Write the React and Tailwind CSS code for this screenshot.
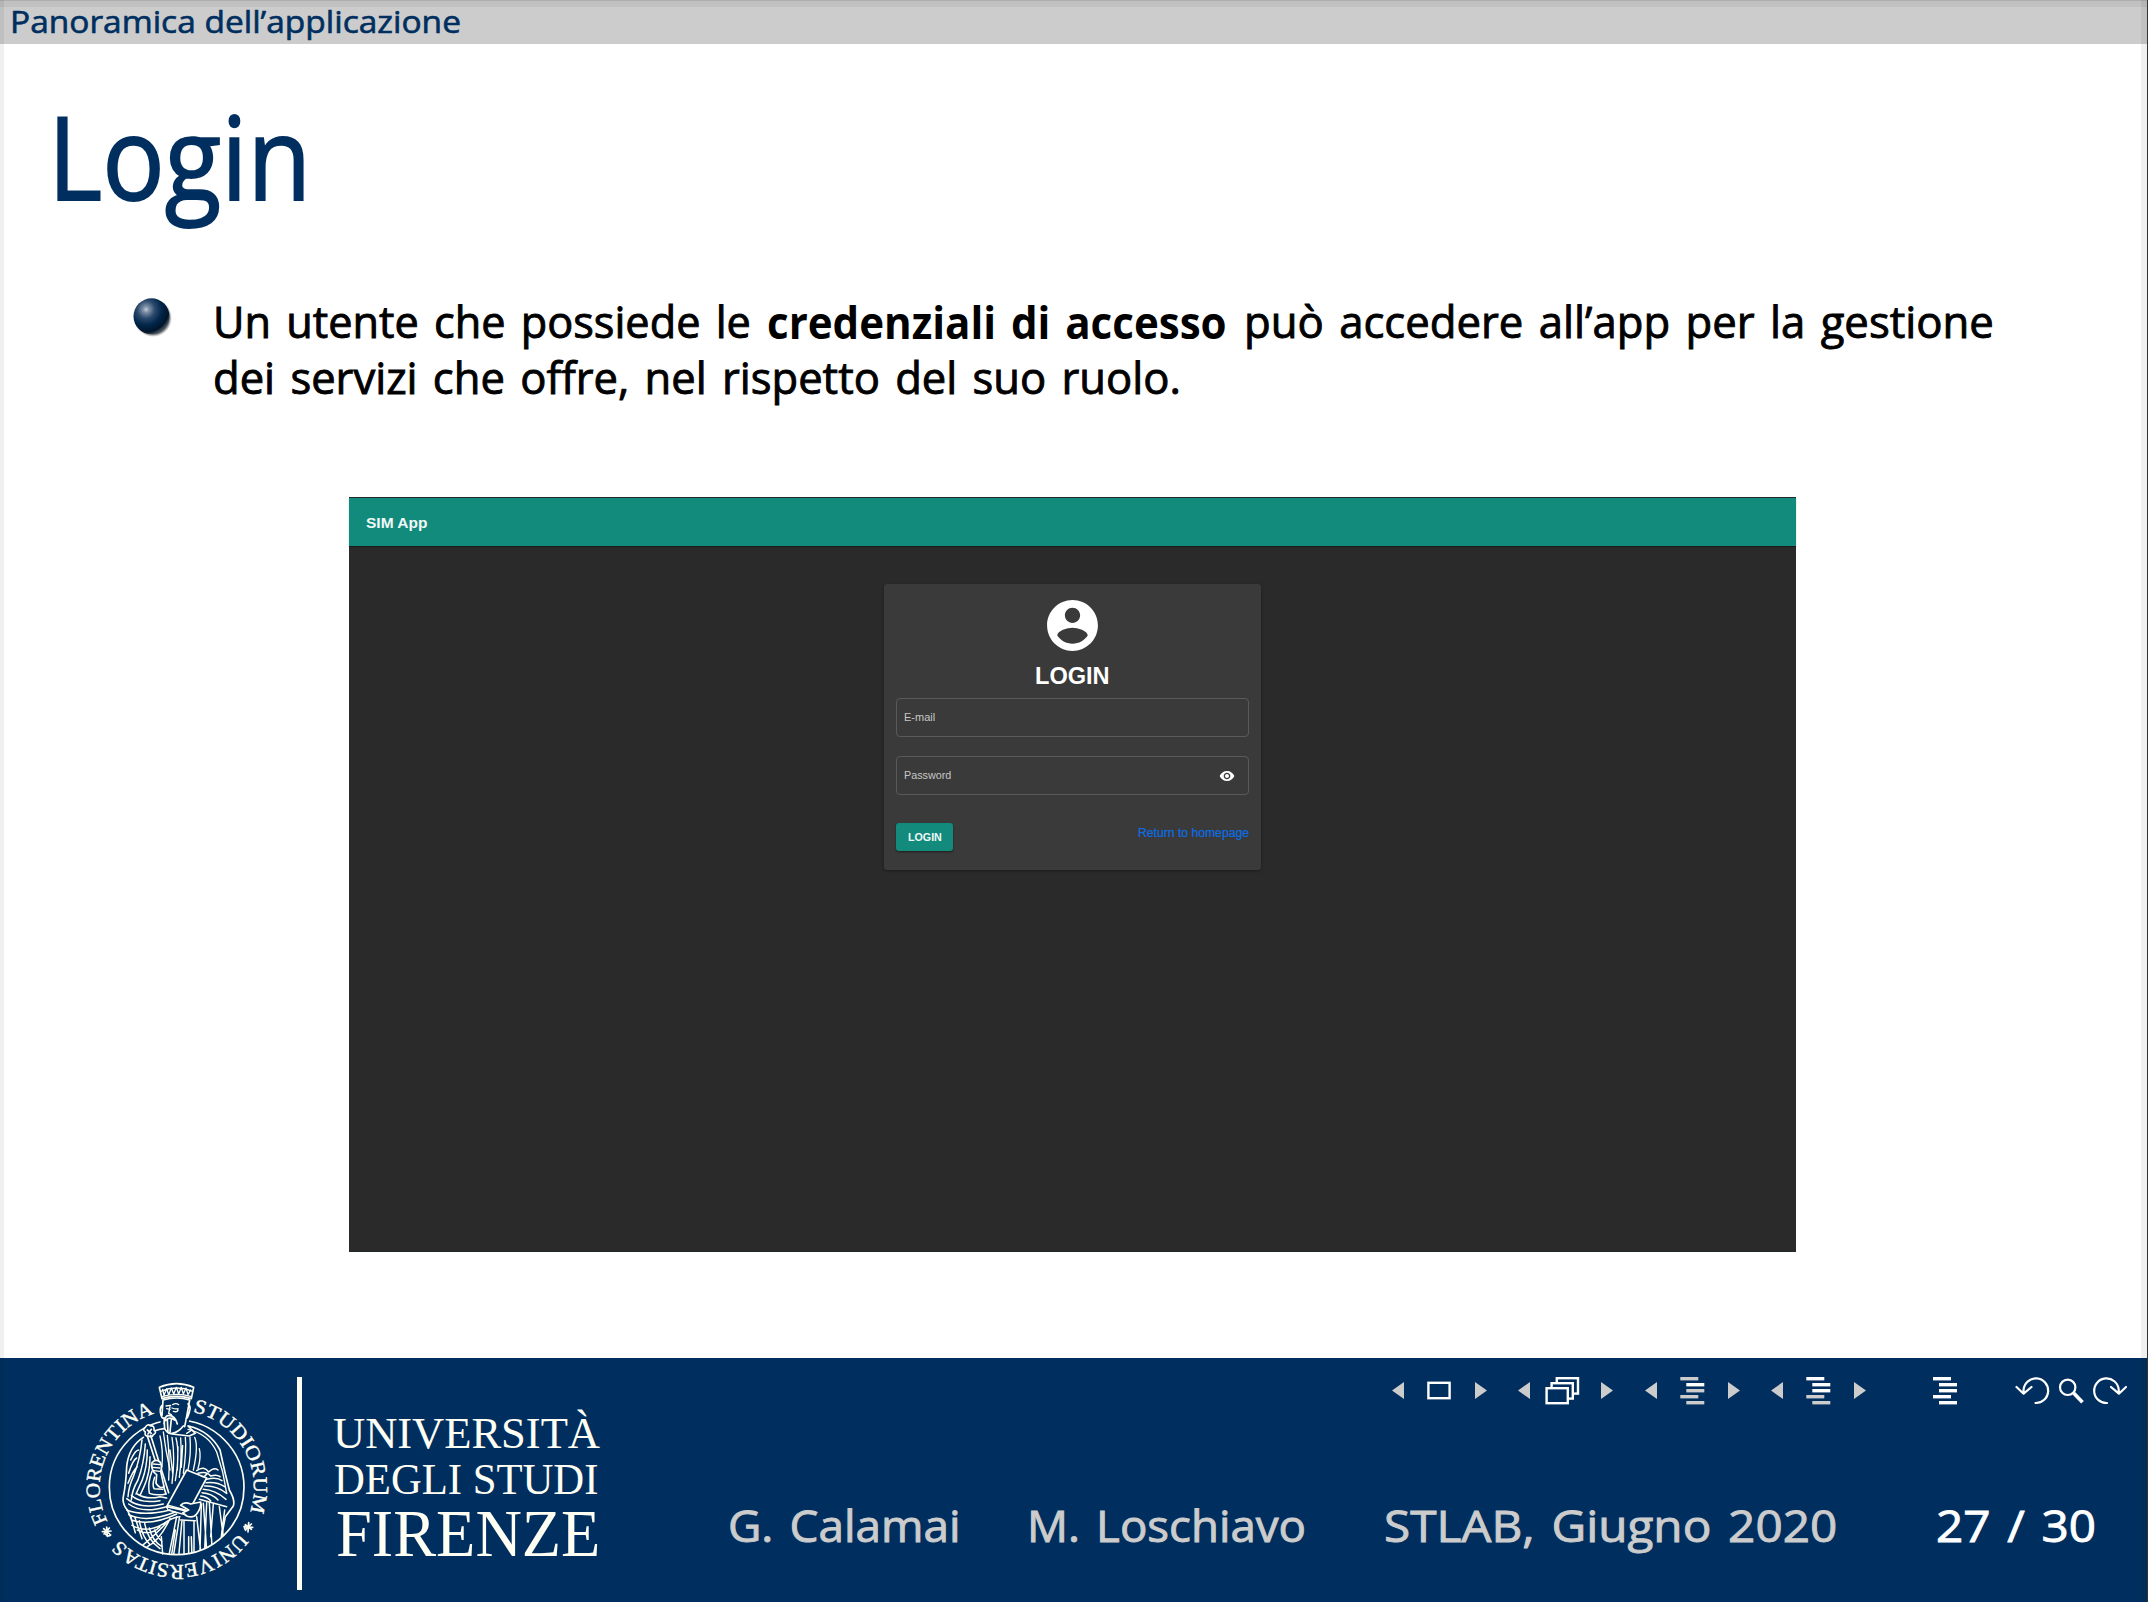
import React, { useLayoutEffect, useRef } from "react";

const SANS = "font-['Open_Sans','Noto_Sans',sans-serif]";
const SERIF = "font-['Liberation_Serif',serif]";
const HELV = "font-['Liberation_Sans',Arial,sans-serif]";
const BODY = "text-[43.5px] [word-spacing:4px] [-webkit-text-stroke:0.9px_currentColor]";

// Single line of text squeezed or stretched horizontally to fill its box.
function Fit({ className = "", textClass = "", children }) {
  const box = useRef(null);
  const text = useRef(null);
  useLayoutEffect(() => {
    const apply = () => {
      const k = box.current.clientWidth / text.current.offsetWidth;
      text.current.style.transform = `scaleX(${k})`;
    };
    apply();
    document.fonts?.ready.then(apply);
  }, []);
  return (
    <span ref={box} className={`block shrink-0 whitespace-nowrap ${className}`}>
      <span ref={text} className={`block w-max origin-left ${textClass}`}>
        {children}
      </span>
    </span>
  );
}

function Bullet() {
  return (
    <svg className="mt-[3px] h-10 w-10 shrink-0" viewBox="0 0 40 40">
      <defs>
        <radialGradient id="ball" cx="0.35" cy="0.31" r="0.7">
          <stop offset="0" stopColor="#c3ccd8" />
          <stop offset="0.12" stopColor="#7f91a8" />
          <stop offset="0.35" stopColor="#2c4a6d" />
          <stop offset="0.62" stopColor="#02264b" />
          <stop offset="0.9" stopColor="#001429" />
          <stop offset="1" stopColor="#3c4a5a" />
        </radialGradient>
        <radialGradient id="ballShade" cx="0.5" cy="0.5" r="0.5">
          <stop offset="0.85" stopColor="#555" stopOpacity="0.8" />
          <stop offset="1" stopColor="#777" stopOpacity="0" />
        </radialGradient>
      </defs>
      <circle cx="21" cy="21" r="19" fill="url(#ballShade)" />
      <circle cx="19.5" cy="19.3" r="18" fill="url(#ball)" />
    </svg>
  );
}

function LoginCard() {
  return (
    <div className="mx-auto mt-[38px] flex h-[286px] w-[377px] flex-col rounded-[3px] bg-[#3a3a3a] px-3 shadow-[0_1px_3px_rgba(0,0,0,0.35)]">
      <svg className="mx-auto mt-[11px] h-[61px] w-[61px] shrink-0" viewBox="0 0 24 24" fill="#fff">
        <path d="M12 2C6.48 2 2 6.48 2 12s4.48 10 10 10 10-4.48 10-10S17.52 2 12 2zm0 3c1.66 0 3 1.34 3 3s-1.34 3-3 3-3-1.34-3-3 1.34-3 3-3zm0 14.2c-2.5 0-4.71-1.28-6-3.22.03-1.99 4-3.08 6-3.08 1.99 0 5.97 1.09 6 3.08-1.29 1.94-3.5 3.22-6 3.22z" />
      </svg>
      <Fit className="mx-auto mt-[7px] h-[26px] w-[75px] leading-[26px] text-white" textClass="text-[24.5px] font-bold">
        LOGIN
      </Fit>
      <div className="mt-[9px] flex h-[39px] shrink-0 items-center rounded-[4px] border border-[#5a5a5a] px-[7px]">
        <Fit className="-mt-[2px] w-[31px] leading-[14px] text-[#c6c6c6]" textClass="text-[11px]">
          E-mail
        </Fit>
      </div>
      <div className="mt-[19px] flex h-[39px] shrink-0 items-center justify-between rounded-[4px] border border-[#5a5a5a] pl-[7px] pr-[13px]">
        <Fit className="-mt-[2px] w-[47px] leading-[14px] text-[#c6c6c6]" textClass="text-[11px]">
          Password
        </Fit>
        <svg className="mt-px h-4 w-4" viewBox="0 0 24 24" fill="#fff">
          <path d="M12 4.5C7 4.5 2.73 7.61 1 12c1.73 4.39 6 7.5 11 7.5s9.27-3.11 11-7.5c-1.73-4.39-6-7.5-11-7.5zM12 17c-2.76 0-5-2.24-5-5s2.24-5 5-5 5 2.24 5 5-2.24 5-5 5zm0-8c-1.66 0-3 1.34-3 3s1.34 3 3 3 3-1.34 3-3-1.34-3-3-3z" />
        </svg>
      </div>
      <div className="mt-[28px] flex items-start justify-between">
        <button className="flex h-7 w-[57px] items-center justify-center rounded-[3px] bg-[#128b7d] shadow-[0_1px_2px_rgba(0,0,0,0.5)]">
          <Fit className="w-[34px] leading-[14px] text-[#f1f8f7]" textClass="text-[11px] font-bold">
            LOGIN
          </Fit>
        </button>
        <Fit className="mt-px w-[111px] leading-[18px] text-[#0b6ee6]" textClass="text-[12.5px] [-webkit-text-stroke:0.2px_currentColor]">
          Return to homepage
        </Fit>
      </div>
    </div>
  );
}

function Seal() {
  return (
    <svg className="h-[244px] w-[240px] shrink-0" viewBox="0 24 720 732" fill="none" stroke="#fffff4" strokeWidth="5" strokeLinecap="round" strokeLinejoin="round">
      <defs>
        <path id="arcLeft" d="M 146 520 A 231 231 0 0 1 295 188" />
        <path id="arcRight" d="M 398 186 A 231 231 0 0 1 567 493" />
        <path id="arcBottom" d="M 537 548 A 231 231 0 0 1 178 567" />
        <clipPath id="inner">
          <circle cx="350" cy="412" r="202" />
        </clipPath>
      </defs>
      <g fill="#fffff4" stroke="#fffff4" strokeWidth="1.2" className="font-['Liberation_Serif',serif] text-[60px]">
        <text>
          <textPath href="#arcLeft" startOffset="6" textLength="400" lengthAdjust="spacingAndGlyphs">FLORENTINA</textPath>
        </text>
        <text>
          <textPath href="#arcRight" textLength="390" lengthAdjust="spacingAndGlyphs">STUDIORUM</textPath>
        </text>
        <text>
          <textPath href="#arcBottom" textLength="410" lengthAdjust="spacingAndGlyphs">UNIVERSITAS</textPath>
        </text>
      </g>
      <circle cx="350" cy="412" r="202" strokeWidth="5" />
      {/* fleurons between the words */}
      <g strokeWidth="5">
        <path d="M127 545 l26 -2 M140 531 l2 28 M131 536 l18 16 M148 534 l-16 18 M137 553 q8 8 15 2" />
        <path d="M552 530 l26 2 M566 518 l-2 28 M556 524 l18 14 M574 522 l-17 17 M557 541 q-6 -8 -2 -12" />
      </g>
      {/* crown and head */}
      <path fill="#002f5f" stroke="none" d="M297 105 L401 105 L392 160 L386 222 L300 240 L306 160 Z" />
      <path d="M298 112 Q350 90 401 112 L394 146 Q350 132 306 146 Z" />
      <path d="M302 124 Q350 104 398 124" strokeWidth="4" />
      <path strokeWidth="4" d="M308 118 l4 18 8 -20 6 18 8 -20 7 18 8 -20 7 20 8 -20 6 20 8 -18 6 20 8 -14 M306 140 Q350 126 394 140" />
      <path d="M309 150 L306 196 M306 166 Q297 176 303 196 Q306 206 311 204 M389 150 L380 200 L374 230 M384 162 Q394 168 388 186 Q383 206 378 206 M309 150 Q350 138 389 150" />
      <path strokeWidth="4" d="M318 168 l14 -2 M338 164 q10 -6 18 0 M336 174 q10 4 18 2 M320 176 l10 2 M330 170 L326 190 L334 194 M340 184 q12 4 14 -4" />
      <path d="M312 222 Q312 196 328 196 Q346 198 352 222 M316 212 Q328 198 344 210 M312 204 L314 236 Q324 254 336 250 Q354 248 370 228 M322 210 L324 248 M334 208 L330 246" />
      {/* collar and shoulders */}
      <path d="M336 252 L388 258 L406 250 L384 228 M312 236 Q280 240 268 254 M250 262 Q206 290 200 350 Q198 400 190 440 Q186 462 202 480 L214 506 M386 228 Q450 244 480 300 L496 372 L508 420 Q526 450 520 468 L496 500 L486 552" />
      <path strokeWidth="4" d="M384 238 Q446 252 470 306 L488 366 L500 430 M396 240 L380 250 M310 246 L318 300 L330 360" />
      {/* sceptre */}
      <path fill="#002f5f" d="M256 232 q-10 8 0 14 q-4 14 10 12 q10 6 14 -4 q12 -6 2 -14 q2 -14 -10 -12 q-10 -8 -16 4 Z" />
      <path d="M262 240 l12 10 M274 238 l-10 14 M262 258 L318 432 M272 256 L326 428" />
      {/* raised hand */}
      <path fill="#002f5f" d="M276 338 Q286 326 300 336 Q308 350 302 364 L312 410 Q300 418 288 400 L290 374 Q272 362 276 338 Z" />
      <path strokeWidth="4" d="M280 342 l20 2 M278 352 l22 2 M282 362 l18 2" />
      {/* chest folds */}
      <path strokeWidth="4" d="M300 258 Q310 300 306 350 M322 256 Q330 320 326 390 M336 262 Q346 320 336 400 M348 264 Q360 310 346 392 M362 264 Q366 320 358 382 M376 262 Q380 300 370 370 M390 262 Q394 310 384 360 M404 262 Q416 290 400 360 M418 296 Q424 320 414 356 M330 300 l8 70 M354 290 l-2 70 M368 286 l-4 66" />
      {/* left sleeve */}
      <path strokeWidth="4.5" d="M246 270 Q240 330 220 380 Q206 410 204 440 M256 282 Q252 340 234 390 Q216 420 214 450 M262 300 Q262 350 246 392 L228 432 M270 320 Q270 370 252 410 L240 436 M212 330 Q226 300 236 300 M206 370 Q218 330 230 324 M276 364 Q262 400 268 430 Q290 438 318 432 M284 382 Q276 404 282 416 L308 418 M204 400 Q220 360 232 350 M232 432 Q260 450 300 440 L320 444 M200 446 Q240 480 310 462 M206 462 Q246 492 320 470 M214 436 Q240 462 300 452" />
      {/* lap drapery */}
      <path strokeWidth="4.5" d="M200 480 Q250 500 330 480 M206 494 Q260 520 346 486 M214 510 Q270 530 350 492 M216 526 Q262 552 312 520 Q340 500 360 500 M224 500 L246 566 M212 500 L226 548 M238 512 Q246 560 270 584 M254 520 Q262 570 300 596 M268 534 Q276 572 306 590 M284 540 Q290 560 306 574 M250 584 Q280 560 318 520 M262 590 Q300 570 330 506 M308 612 L304 560 M300 530 Q270 560 232 540" />
      {/* book */}
      <path fill="#002f5f" d="M380 360 L440 384 L386 484 L320 470 Z" />
      <path strokeWidth="4" d="M320 470 L324 480 L374 494 L386 484 M326 466 L376 480" />
      <path fill="#002f5f" d="M362 466 Q372 454 392 462 L422 456 Q424 474 410 492 Q400 506 380 498 L368 488 L386 480 Z" />
      {/* right cuff */}
      <path strokeWidth="4.5" d="M410 362 Q432 346 446 366 Q462 350 474 360 M414 370 Q440 362 452 378 Q470 372 480 380 M440 388 Q470 380 486 392 M438 398 Q470 394 494 410 M434 408 Q470 406 500 430 M430 418 Q466 420 498 448 M426 428 Q456 430 474 450 M422 438 Q440 440 452 452 M418 448 L500 470 M440 372 q-8 12 -16 6" />
      {/* skirt folds */}
      <g clipPath="url(#inner)" strokeWidth="4.5">
        <path d="M358 504 L340 620 M350 500 L326 620 M366 510 L356 620 M372 512 L372 620 M402 512 L402 620 M410 500 L424 620 M424 462 L420 600 M430 460 L440 600 M440 458 L434 600 M448 458 L456 590 M460 462 L452 560 M478 470 L490 560 M494 480 L484 560 M362 510 L406 512 M346 540 L334 620 M386 560 L386 620 M394 560 L396 620" />
      </g>
    </svg>
  );
}

function Wordmark() {
  return (
    <div className={`ml-[31px] flex flex-col pt-[52px] text-[#fffff4] ${SERIF}`}>
      <Fit className="h-[46px] w-[267px] leading-[46px]" textClass="text-[45px]">UNIVERSITÀ</Fit>
      <Fit className="ml-[1px] h-[46px] w-[264px] leading-[46px]" textClass="text-[43.5px]">DEGLI STUDI</Fit>
      <Fit className="-mt-[3px] ml-[3px] h-[68px] w-[264px] leading-[68px]" textClass="text-[67px]">FIRENZE</Fit>
    </div>
  );
}

function Outline({ x, dim = [] }) {
  return [0, 1, 2, 3, 4].map((i) => (
    <rect key={i} x={x + (i === 0 || i === 3 ? 0 : 6)} y={1 + i * 6} width="18" height="3.4" fill={dim.includes(i) ? "#ccc" : "#fff"} />
  ));
}

function NavGroup({ children }) {
  return (
    <svg className="h-[30px] w-[95px] shrink-0" viewBox="0 0 95 30">
      <path d="M0 14.5 L12 6 V23 Z M95 14.5 L83 6 V23 Z" fill="#ccc" />
      {children}
    </svg>
  );
}

function Navigation() {
  return (
    <div className="flex pl-[752px] pt-[18px]">
      <div className="flex gap-[31.4px]">
        <NavGroup>
          <rect x="36.4" y="6.8" width="21.2" height="15.4" fill="none" stroke="#fff" strokeWidth="2.4" />
        </NavGroup>
        <NavGroup>
          <g fill="#002f5f" stroke="#fff" strokeWidth="2.4">
            <rect x="38.8" y="2.2" width="21.2" height="15.4" />
            <rect x="33.6" y="7.2" width="21.2" height="15.4" />
            <rect x="28.6" y="12.2" width="21.2" height="15" />
          </g>
        </NavGroup>
        <NavGroup>
          <Outline x={35.3} dim={[0, 2, 3, 4]} />
        </NavGroup>
        <NavGroup>
          <Outline x={35.3} dim={[3, 4]} />
        </NavGroup>
      </div>
      <svg className="ml-[67px] h-[30px] w-6 shrink-0" viewBox="0 0 24 30">
        <Outline x={0} />
      </svg>
      <svg className="ml-[58px] h-[30px] w-[113px] shrink-0" viewBox="0 0 113 30" fill="none" stroke="#fff" strokeWidth="2.2" strokeLinecap="round" strokeLinejoin="round">
        <path d="M20.5 27 A12.3 12.3 0 1 0 8.6 13.5 L8.4 17.5 M1.5 11 L8.6 17.7 L16.5 11" />
        <circle cx="52.7" cy="11.3" r="7.7" />
        <path d="M58.6 17 L67.5 26.3" strokeWidth="3.6" strokeLinecap="butt" />
        <path d="M92 27 A12.3 12.3 0 1 1 103.7 13.5 L103.9 17.5 M96 11 L103.9 17.7 L111 11" />
      </svg>
    </div>
  );
}

export default function App() {
  return (
    <div className={`relative flex h-[1602px] w-[2148px] flex-col overflow-hidden bg-white ${SANS}`}>
      <header className="h-[44px] shrink-0 bg-[#ccc] pl-[10px]">
        <Fit className="w-[451px] leading-[42px] text-[#002f5f]" textClass="text-[30.8px] [-webkit-text-stroke:0.6px_currentColor]">
          Panoramica dell’applicazione
        </Fit>
      </header>

      <h1 className="mt-[32px] pl-[48px]">
        <Fit className="h-[160px] w-[263px] leading-[160px] text-[#002f5f]" textClass="text-[115px] [-webkit-text-stroke:1.8px_currentColor]">
          Login
        </Fit>
      </h1>

      <div className="mt-[58px] flex pl-[132px] text-black">
        <Bullet />
        <div className="ml-[41px] flex flex-col leading-[56px]">
          <div className="flex">
            <Fit className="w-[538px]" textClass={BODY}>Un utente che possiede le</Fit>
            <Fit className="ml-[16px] w-[460px]" textClass="text-[44px] font-bold [word-spacing:4px]">credenziali di accesso</Fit>
            <Fit className="ml-[17px] w-[750px]" textClass={BODY}>può accedere all’app per la gestione</Fit>
          </div>
          <Fit className="w-[968px]" textClass={BODY}>
            dei servizi che offre, nel rispetto del suo ruolo.
          </Fit>
        </div>
      </div>

      <main className={`ml-[349px] mt-[91px] h-[755px] w-[1447px] shrink-0 border-y border-[#1f2a2a] bg-[#2a2a2a] ${HELV}`}>
        <div className="flex h-[48px] items-center bg-[#128b7d] pl-[17px] shadow-[0_1px_1px_rgba(0,0,0,0.35)]">
          <Fit className="mt-[2px] w-[61px] leading-[20px] text-[#f1f8f7]" textClass="text-[15px] font-bold">SIM App</Fit>
        </div>
        <LoginCard />
      </main>

      <footer className="mt-auto flex h-[244px] shrink-0 bg-[#002f5f]">
        <div className="flex w-[640px] shrink-0 pl-[60px]">
          <Seal />
          <div className="-ml-[3px] mt-[19px] h-[213px] w-[5px] shrink-0 bg-[#fffff4]" />
          <Wordmark />
        </div>
        <div className="flex flex-1 flex-col">
          <Navigation />
          <div className="mt-[92px] flex pl-[88px] leading-[56px] text-[#ccc]">
            <Fit className="w-[233px]" textClass={BODY}>G. Calamai</Fit>
            <Fit className="ml-[66px] w-[279px]" textClass={BODY}>M. Loschiavo</Fit>
            <Fit className="ml-[78px] w-[453px]" textClass={BODY}>STLAB, Giugno 2020</Fit>
            <Fit className="ml-[99px] w-[160px] text-white" textClass={BODY}>27 / 30</Fit>
          </div>
        </div>
      </footer>

      {/* viewer frame edges */}
      <div className="pointer-events-none absolute inset-x-0 top-0 h-[7px] border-t border-black/10 bg-black/5" />
      <div className="pointer-events-none absolute inset-y-0 left-0 w-[4px] bg-black/6" />
      <div className="pointer-events-none absolute inset-y-0 right-0 w-[7px] border-r border-[#333] bg-black/6" />
    </div>
  );
}
